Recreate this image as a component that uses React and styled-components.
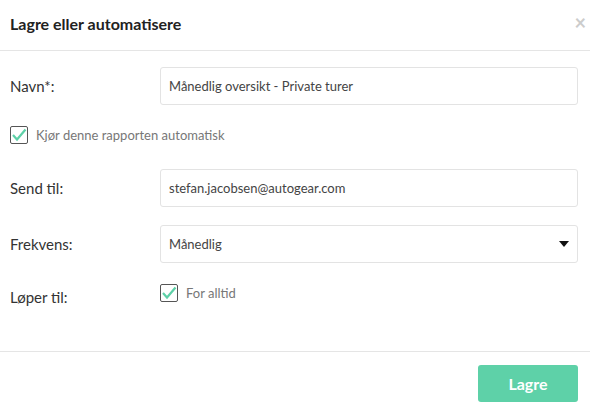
import React from "react";
import styled, { createGlobalStyle } from "styled-components";

const G = createGlobalStyle`
  body{margin:0;background:#fff;font-family:Lato,"Open Sans",sans-serif;}
`;
const Modal = styled.div`width:590px;height:414px;display:flex;flex-direction:column;`;
const Header = styled.div`height:51px;box-sizing:border-box;border-bottom:1px solid #e5e5e5;display:flex;align-items:center;justify-content:space-between;padding:0 10px;`;
const Title = styled.div`font-size:16px;font-weight:700;color:#222;margin-top:-4px;`;
const Close = styled.div`font-size:20px;color:#ccc;font-weight:700;margin-top:-6px;margin-right:-6px;`;
const Body = styled.div`flex:1;padding:16px 12px 0 10px;display:flex;flex-direction:column;border-bottom:1px solid #e5e5e5;`;
const Row = styled.div`display:flex;align-items:${p=>p.top?"flex-start":"center"};height:${p=>p.h}px;margin-top:${p=>p.mt||0}px;`;
const Label = styled.div`width:150px;font-size:15px;color:#333;${p=>p.pt?`padding-top:${p.pt}px;`:""}`;
const Input = styled.div`flex:1;height:38px;box-sizing:border-box;border:1px solid #e3e3e3;border-radius:3px;padding:0 8px;display:flex;align-items:center;justify-content:space-between;font-size:13px;color:#444;`;
const Check = styled.span`width:16px;height:16px;border:1px solid #555;border-radius:2px;display:inline-flex;align-items:center;justify-content:center;margin-right:8px;`;
const CheckLabel = styled.label`display:flex;align-items:center;font-size:13px;color:#777;`;
const Footer = styled.div`height:62px;display:flex;align-items:center;justify-content:flex-end;padding:0 12px;`;
const Button = styled.button`width:100px;height:37px;border:none;border-radius:3px;background:#5ed1a8;color:#fff;font-family:Lato,sans-serif;font-size:16px;font-weight:700;`;

const Tick = () => (
  <svg width="16" height="14" viewBox="0 0 16 14"><path d="M2 7l4 4.5L14.5 1.5" fill="none" stroke="#5ed1a8" strokeWidth="2.2"/></svg>
);
const Box = () => <Check><Tick/></Check>;

export default function App(){
  return <Modal><G/>
    <Header><Title>Lagre eller automatisere</Title><Close>×</Close></Header>
    <Body>
      <Row h={38}><Label>Navn*:</Label><Input>Månedlig oversikt - Private turer</Input></Row>
      <Row h={20} mt={20}><CheckLabel><Box/>Kjør denne rapporten automatisk</CheckLabel></Row>
      <Row h={38} mt={24}><Label>Send til:</Label><Input>stefan.jacobsen@autogear.com</Input></Row>
      <Row h={38} mt={18}><Label>Frekvens:</Label><Input>Månedlig
        <svg width="10" height="6" viewBox="0 0 10 6"><path d="M0 0h10L5 6z" fill="#111"/></svg></Input></Row>
      <Row h={40} mt={21} top><Label pt={4}>Løper til:</Label><CheckLabel><Box/>For alltid</CheckLabel></Row>
    </Body>
    <Footer><Button>Lagre</Button></Footer>
  </Modal>;
}
